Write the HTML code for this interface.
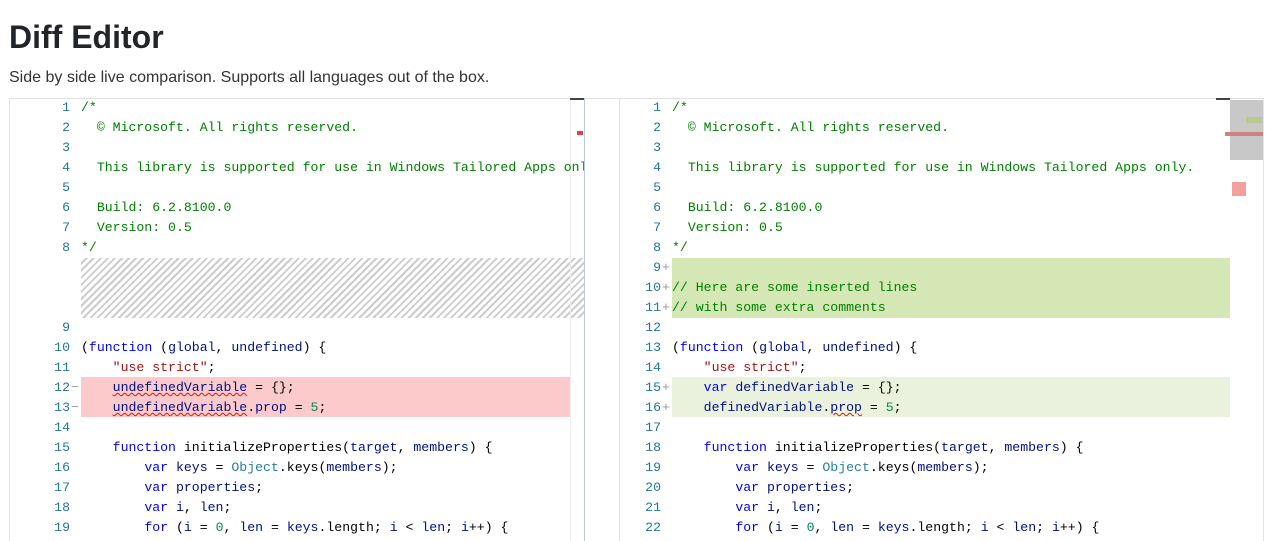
<!DOCTYPE html>
<html><head><meta charset="utf-8"><style>
body{margin:0;width:1280px;height:541px;overflow:hidden;background:#fff;font-family:"Liberation Sans",sans-serif;position:relative}
h1{position:absolute;left:9px;top:19px;margin:0;font-size:32px;font-weight:bold;color:#212529}
.sub{position:absolute;left:9px;top:69px;font-size:16px;color:#333}
.ed{position:absolute;top:98px;height:443px;overflow:hidden}
.ln,.n{font-family:"Liberation Mono",monospace;font-size:13.2px}
.ln{position:absolute;height:20px;line-height:20px;white-space:pre;color:#000}
.n{position:absolute;height:20px;line-height:20px;text-align:right;color:#237893;width:40px}
.n i{position:absolute;left:41px;font-style:normal;color:#999}
.c{color:#008000}.k{color:#0000ff}.s{color:#a31515}.d{color:#098658}.v{color:#001080}.t{color:#267f99}
.sq{text-decoration:underline wavy #e51400;text-decoration-thickness:1px}
</style></head><body>
<h1>Diff Editor</h1>
<div class="sub">Side by side live comparison. Supports all languages out of the box.</div>
<div style="position:absolute;left:9px;top:98px;width:1254px;height:1px;background:#e0e0e0"></div>
<div style="position:absolute;left:9px;top:98px;width:1px;height:443px;background:#e5e5e5"></div>
<div class="ed" style="left:10px;width:574px">
 <div style="position:absolute;left:71px;top:160px;width:503px;height:60px;background:repeating-linear-gradient(-45deg,#fff 0 3px,#ccc 3px 5px)"></div>
 <div style="position:absolute;left:71px;top:279px;width:489px;height:40px;background:#fccaca"></div>
 <div style="position:absolute;left:560px;top:0;width:14px;height:443px;border-left:1px solid #eee"></div>
 <div style="position:absolute;left:560px;top:0;width:14px;height:2px;background:#444"></div>
 <div style="position:absolute;left:567px;top:33px;width:6px;height:4px;background:#e04040"></div>
</div>
<div style="position:absolute;left:584px;top:98px;width:1px;height:443px;background:#bcd"></div>
<div style="position:absolute;left:619px;top:98px;width:1px;height:443px;background:#dde"></div>
<div class="ed" style="left:620px;width:643px">
 <div style="position:absolute;left:52px;top:160px;width:558px;height:60px;background:#d5e7b4"></div>
 <div style="position:absolute;left:52px;top:279px;width:558px;height:40px;background:#eaf2dd"></div>
 <div style="position:absolute;left:610px;top:2px;width:33px;height:60px;background:#c8c8c8"></div>
 <div style="position:absolute;left:596px;top:0;width:14px;height:2px;background:#444"></div>
 <div style="position:absolute;left:626px;top:19px;width:16px;height:6px;background:#b8c890"></div>
 <div style="position:absolute;left:605px;top:34px;width:38px;height:4px;background:#d08080"></div>
 <div style="position:absolute;left:612px;top:84px;width:14px;height:14px;background:#f4a0a0"></div>
</div>
<div style="position:absolute;left:1263px;top:98px;width:1px;height:443px;background:#e5e5e5"></div>
<div style="position:absolute;left:9px;top:0;width:0">
<div class="n" style="left:21px;top:98px">1</div><div class="ln c" style="left:72px;top:98px">/*</div>
<div class="n" style="left:21px;top:118px">2</div><div class="ln c" style="left:72px;top:118px">  © Microsoft. All rights reserved.</div>
<div class="n" style="left:21px;top:138px">3</div>
<div class="n" style="left:21px;top:158px">4</div><div class="ln c" style="left:72px;top:158px;width:503px;overflow:hidden">  This library is supported for use in Windows Tailored Apps only.</div>
<div class="n" style="left:21px;top:178px">5</div>
<div class="n" style="left:21px;top:198px">6</div><div class="ln c" style="left:72px;top:198px">  Build: 6.2.8100.0</div>
<div class="n" style="left:21px;top:218px">7</div><div class="ln c" style="left:72px;top:218px">  Version: 0.5</div>
<div class="n" style="left:21px;top:238px">8</div><div class="ln c" style="left:72px;top:238px">*/</div>
<div class="n" style="left:21px;top:318px">9</div>
<div class="n" style="left:21px;top:338px">10</div><div class="ln" style="left:72px;top:338px">(<span class="k">function</span> (<span class="v">global</span>, <span class="v">undefined</span>) {</div>
<div class="n" style="left:21px;top:358px">11</div><div class="ln s" style="left:72px;top:358px">    "use strict"<span style="color:#000">;</span></div>
<div class="n" style="left:21px;top:378px">12<i>−</i></div><div class="ln" style="left:72px;top:378px">    <span class="v sq">undefinedVariable</span> = {};</div>
<div class="n" style="left:21px;top:398px">13<i>−</i></div><div class="ln" style="left:72px;top:398px">    <span class="v sq">undefinedVariable</span>.<span class="v">prop</span> = <span class="d">5</span>;</div>
<div class="n" style="left:21px;top:418px">14</div>
<div class="n" style="left:21px;top:438px">15</div><div class="ln" style="left:72px;top:438px">    <span class="k">function</span> initializeProperties(<span class="v">target</span>, <span class="v">members</span>) {</div>
<div class="n" style="left:21px;top:458px">16</div><div class="ln" style="left:72px;top:458px">        <span class="k">var</span> <span class="v">keys</span> = <span class="t">Object</span>.keys(<span class="v">members</span>);</div>
<div class="n" style="left:21px;top:478px">17</div><div class="ln" style="left:72px;top:478px">        <span class="k">var</span> <span class="v">properties</span>;</div>
<div class="n" style="left:21px;top:498px">18</div><div class="ln" style="left:72px;top:498px">        <span class="k">var</span> <span class="v">i</span>, <span class="v">len</span>;</div>
<div class="n" style="left:21px;top:518px">19</div><div class="ln" style="left:72px;top:518px">        <span class="k">for</span> (<span class="v">i</span> = <span class="d">0</span>, <span class="v">len</span> = <span class="v">keys</span>.length; <span class="v">i</span> &lt; <span class="v">len</span>; <span class="v">i</span>++) {</div>
<div class="n" style="left:612px;top:98px">1</div><div class="ln c" style="left:663px;top:98px">/*</div>
<div class="n" style="left:612px;top:118px">2</div><div class="ln c" style="left:663px;top:118px">  © Microsoft. All rights reserved.</div>
<div class="n" style="left:612px;top:138px">3</div>
<div class="n" style="left:612px;top:158px">4</div><div class="ln c" style="left:663px;top:158px">  This library is supported for use in Windows Tailored Apps only.</div>
<div class="n" style="left:612px;top:178px">5</div>
<div class="n" style="left:612px;top:198px">6</div><div class="ln c" style="left:663px;top:198px">  Build: 6.2.8100.0</div>
<div class="n" style="left:612px;top:218px">7</div><div class="ln c" style="left:663px;top:218px">  Version: 0.5</div>
<div class="n" style="left:612px;top:238px">8</div><div class="ln c" style="left:663px;top:238px">*/</div>
<div class="n" style="left:612px;top:258px">9<i>+</i></div>
<div class="n" style="left:612px;top:278px">10<i>+</i></div><div class="ln c" style="left:663px;top:278px">// Here are some inserted lines</div>
<div class="n" style="left:612px;top:298px">11<i>+</i></div><div class="ln c" style="left:663px;top:298px">// with some extra comments</div>
<div class="n" style="left:612px;top:318px">12</div>
<div class="n" style="left:612px;top:338px">13</div><div class="ln" style="left:663px;top:338px">(<span class="k">function</span> (<span class="v">global</span>, <span class="v">undefined</span>) {</div>
<div class="n" style="left:612px;top:358px">14</div><div class="ln s" style="left:663px;top:358px">    "use strict"<span style="color:#000">;</span></div>
<div class="n" style="left:612px;top:378px">15<i>+</i></div><div class="ln" style="left:663px;top:378px">    <span class="k">var</span> <span class="v">definedVariable</span> = {};</div>
<div class="n" style="left:612px;top:398px">16<i>+</i></div><div class="ln" style="left:663px;top:398px">    <span class="v">definedVariable</span>.<span class="v sq">prop</span> = <span class="d">5</span>;</div>
<div class="n" style="left:612px;top:418px">17</div>
<div class="n" style="left:612px;top:438px">18</div><div class="ln" style="left:663px;top:438px">    <span class="k">function</span> initializeProperties(<span class="v">target</span>, <span class="v">members</span>) {</div>
<div class="n" style="left:612px;top:458px">19</div><div class="ln" style="left:663px;top:458px">        <span class="k">var</span> <span class="v">keys</span> = <span class="t">Object</span>.keys(<span class="v">members</span>);</div>
<div class="n" style="left:612px;top:478px">20</div><div class="ln" style="left:663px;top:478px">        <span class="k">var</span> <span class="v">properties</span>;</div>
<div class="n" style="left:612px;top:498px">21</div><div class="ln" style="left:663px;top:498px">        <span class="k">var</span> <span class="v">i</span>, <span class="v">len</span>;</div>
<div class="n" style="left:612px;top:518px">22</div><div class="ln" style="left:663px;top:518px">        <span class="k">for</span> (<span class="v">i</span> = <span class="d">0</span>, <span class="v">len</span> = <span class="v">keys</span>.length; <span class="v">i</span> &lt; <span class="v">len</span>; <span class="v">i</span>++) {</div>
</div>
</body></html>
